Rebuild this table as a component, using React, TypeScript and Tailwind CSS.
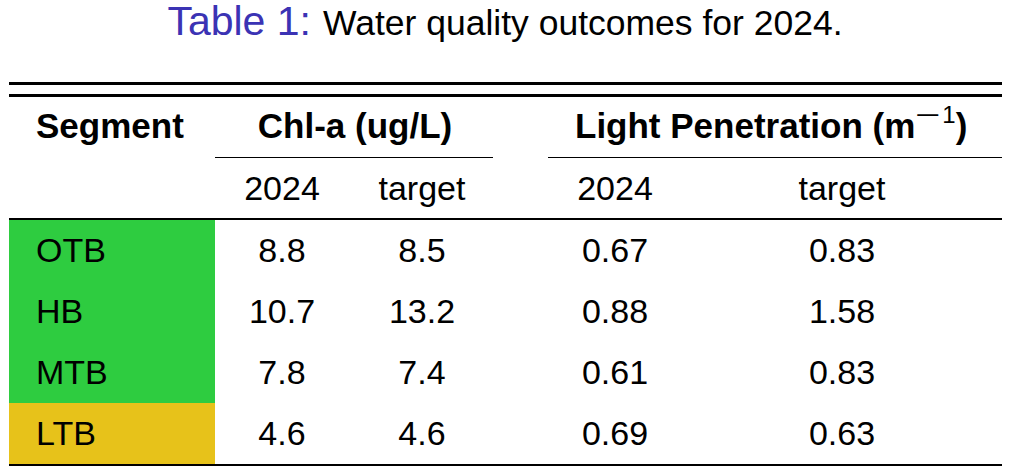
import React from 'react';

interface Row {
  segment: string;
  color: string;
  chlYear: string;
  chlTarget: string;
  lightYear: string;
  lightTarget: string;
}

const rows: Row[] = [
  { segment: 'OTB', color: 'bg-[#2ecc40]', chlYear: '8.8', chlTarget: '8.5', lightYear: '0.67', lightTarget: '0.83' },
  { segment: 'HB', color: 'bg-[#2ecc40]', chlYear: '10.7', chlTarget: '13.2', lightYear: '0.88', lightTarget: '1.58' },
  { segment: 'MTB', color: 'bg-[#2ecc40]', chlYear: '7.8', chlTarget: '7.4', lightYear: '0.61', lightTarget: '0.83' },
  { segment: 'LTB', color: 'bg-[#e7c21a]', chlYear: '4.6', chlTarget: '4.6', lightYear: '0.69', lightTarget: '0.63' },
];

// segment | chl 2024 | chl target | spacer | light 2024 | light target
const cols = 'grid grid-cols-[206px_134px_146px_53px_134px_320px]';

export default function App() {
  return (
    <div className="w-[1010px] h-[473px] bg-white text-black font-['Liberation_Sans',Arial,sans-serif]">
      {/* Caption */}
      <div className="h-[82px] pt-[1px] flex items-baseline justify-center gap-[12px]">
        <span className="text-[41px] leading-[41px] text-[#3b33b4]">Table 1:</span>
        <span className="text-[35.5px] leading-[41px]">Water quality outcomes for 2024.</span>
      </div>

      <div className="ml-[9px] w-[993px]">
        {/* double top rule */}
        <div className="h-[2.5px] bg-black" />
        <div className="h-[2.5px] bg-black mt-[9.5px]" />

        {/* Header */}
        <div className={`${cols} h-[60px] text-[35px] leading-[57px] font-bold`}>
          <div className="pl-[27px]">Segment</div>
          <div className="col-span-2 text-center">Chl-a (ug/L)</div>
          <div />
          <div className="col-span-2 pl-[27px] whitespace-nowrap">
            Light Penetration (m
            <span className="relative -top-[15px] font-normal text-[24px]">
              <span className="inline-block w-[22px] origin-left scale-x-[1.8]">−</span>
              <span className="ml-[5px]">1</span>
            </span>
            )
          </div>
        </div>

        {/* cmidrules */}
        <div className={`${cols} h-[1.5px]`}>
          <div />
          <div className="col-span-2 mr-[2px] bg-black" />
          <div />
          <div className="col-span-2 bg-black" />
        </div>

        {/* Sub header */}
        <div className={`${cols} h-[60px] text-[34px] leading-[60px]`}>
          <div />
          <div className="text-center">2024</div>
          <div className="text-center">target</div>
          <div />
          <div className="text-center">2024</div>
          <div className="text-center">target</div>
        </div>

        <div className="h-[1.5px] bg-black" />

        {/* Body */}
        {rows.map((r) => (
          <div key={r.segment} className={`${cols} h-[61px] text-[34px] leading-[61px]`}>
            <div className={`${r.color} pl-[27px]`}>{r.segment}</div>
            <div className="text-center">{r.chlYear}</div>
            <div className="text-center">{r.chlTarget}</div>
            <div />
            <div className="text-center">{r.lightYear}</div>
            <div className="text-center">{r.lightTarget}</div>
          </div>
        ))}

        <div className="h-[2.5px] bg-black" />
      </div>
    </div>
  );
}
